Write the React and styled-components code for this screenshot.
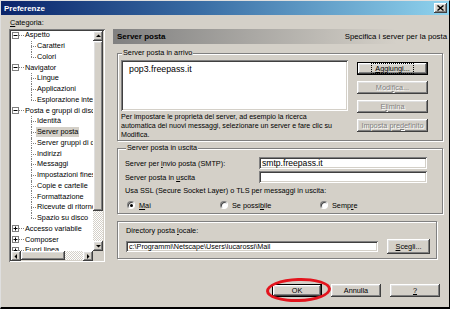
import React from "react";
import styled, { createGlobalStyle, css } from "styled-components";

const GlobalStyle = createGlobalStyle`
  html, body {
    margin: 0;
    padding: 0;
    background: #d4d0c8;
  }
  body {
    font-family: "Liberation Sans", Arial, sans-serif;
  }
`;

const raised = css`
  box-shadow: inset -1px -1px 0 #404040, inset 1px 1px 0 #ffffff,
    inset -2px -2px 0 #808080, inset 2px 2px 0 #dfdfdf;
`;

const sunken = css`
  box-shadow: inset 1px 1px 0 #808080, inset -1px -1px 0 #ffffff,
    inset 2px 2px 0 #404040, inset -2px -2px 0 #d4d0c8;
`;

const dither = css`
  background: repeating-conic-gradient(#ffffff 0 25%, #d4d0c8 0 50%) 0 0 / 2px
    2px;
`;

const tree = [
  { label: "Aspetto", open: true, children: ["Caratteri", "Colori"] },
  {
    label: "Navigator",
    open: true,
    children: ["Lingue", "Applicazioni", "Esplorazione intelligente"],
  },
  {
    label: "Posta e gruppi di discussione",
    open: true,
    children: [
      "Identità",
      "Server posta",
      "Server gruppi di discussione",
      "Indirizzi",
      "Messaggi",
      "Impostazioni finestra",
      "Copie e cartelle",
      "Formattazione",
      "Ricevute di ritorno",
      "Spazio su disco",
    ],
  },
  { label: "Accesso variabile", open: false },
  { label: "Composer", open: false },
  { label: "Fuori linea", open: false },
];

const Expander = ({ open }) => (
  <ExpanderIcon width="7" height="7" viewBox="0 0 7 7">
    <rect x="0.5" y="0.5" width="6" height="6" fill="#fff" stroke="#808080" />
    <path d="M1.5 3.5h4" stroke="#000" />
    {!open && <path d="M3.5 1.5v4" stroke="#000" />}
  </ExpanderIcon>
);

const Arrow = ({ dir }) => {
  const paths = {
    up: "M1 4h5L3.5 1.5z",
    down: "M1 2h5L3.5 4.5z",
    left: "M4 1v5L1.5 3.5z",
    right: "M2 1v5l2.5-2.5z",
  };
  return (
    <svg width="7" height="7" viewBox="0 0 7 7">
      <path d={paths[dir]} fill="#000" />
    </svg>
  );
};

const u = (s) => <U>{s}</U>;

const Preferences = () => {
  return (
    <Window>
      <TitleBar>
        <span>Preferenze</span>
        <CloseButton>
          <svg width="7" height="6" viewBox="0 0 7 6">
            <path d="M0.5 0.5l6 5M6.5 0.5l-6 5" stroke="#000" strokeWidth="1.4" />
          </svg>
        </CloseButton>
      </TitleBar>

      <Body>
        <CategoryLabel>{u("C")}ategoria:</CategoryLabel>

        <TreeBox>
          <TreeList>
            {tree.map((node) => (
              <div key={node.label}>
                <RootRow>
                  <Expander open={node.open} />
                  <Connector />
                  <NodeLabel>{node.label}</NodeLabel>
                </RootRow>
                {node.open && (
                  <ChildList>
                    {node.children.map((c) => (
                      <ChildRow key={c}>
                        <NodeLabel $selected={c === "Server posta"}>{c}</NodeLabel>
                      </ChildRow>
                    ))}
                  </ChildList>
                )}
              </div>
            ))}
          </TreeList>
          <VScroll>
            <ScrollButton>
              <Arrow dir="up" />
            </ScrollButton>
            <VThumb />
            <Track />
            <ScrollButton>
              <Arrow dir="down" />
            </ScrollButton>
          </VScroll>
          <HScroll>
            <ScrollButton>
              <Arrow dir="left" />
            </ScrollButton>
            <HThumb />
            <Track />
            <ScrollButton>
              <Arrow dir="right" />
            </ScrollButton>
          </HScroll>
          <Corner />
        </TreeBox>

        <Panel>
          <HeaderBar>
            <HeaderTitle>Server posta</HeaderTitle>
            <HeaderHint>Specifica i server per la posta</HeaderHint>
          </HeaderBar>

          <Group $mt={4} $pad="2px 14px 0 3px">
            <Legend>Server posta in arrivo</Legend>
            <IncomingRow>
              <div>
                <ServerList>pop3.freepass.it</ServerList>
                <Description>
                  Per impostare le proprietà del server, ad esempio la ricerca
                  <br />
                  automatica dei nuovi messaggi, selezionare un server e fare clic su
                  <br />
                  Modifica.
                </Description>
              </div>
              <ButtonColumn>
                <Button $default>
                  <Focus>{u("A")}ggiungi...</Focus>
                </Button>
                <Button disabled>Modi{u("f")}ica...</Button>
                <Button disabled>E{u("l")}imina</Button>
                <Button disabled>Imposta pre{u("d")}efinito</Button>
              </ButtonColumn>
            </IncomingRow>
          </Group>

          <Group $mt={2} $pad="2px 15px 3px 7px">
            <Legend>Server posta in uscita</Legend>
            <FieldRow>
              <span>Server per {u("i")}nvio posta (SMTP):</span>
              <TextInput $w={168}>smtp.freepass.it</TextInput>
            </FieldRow>
            <FieldRow $mt={2}>
              <span>Server posta in {u("u")}scita</span>
              <TextInput $w={168} />
            </FieldRow>
            <TextLine $mt={3}>
              Usa SSL (Secure Socket Layer) o TLS per messaggi in uscita:
            </TextLine>
            <RadioRow>
              <RadioOption>
                <Radio $checked />
                <span>{u("M")}ai</span>
              </RadioOption>
              <RadioOption>
                <Radio />
                <span>Se possi{u("b")}ile</span>
              </RadioOption>
              <RadioOption>
                <Radio />
                <span>Semp{u("r")}e</span>
              </RadioOption>
            </RadioRow>
          </Group>

          <Group $mt={7} $mr={10} $pad="4px 6px 4px 8px">
            <TextLine>Directory posta {u("l")}ocale:</TextLine>
            <DirectoryRow>
              <TextInput $w={252} $small>
                c:\Programmi\Netscape\Users\lucarossi\Mail
              </TextInput>
              <Button $w={43} $h={15}>
                {u("S")}cegli...
              </Button>
            </DirectoryRow>
          </Group>
        </Panel>
      </Body>

      <Footer>
        <OkWrap>
          <Button $w={50} $default>
            OK
          </Button>
          <RedCircle />
        </OkWrap>
        <Button $w={50}>Annulla</Button>
        <Button $w={50}>{u("?")}</Button>
      </Footer>
    </Window>
  );
};

const Window = styled.div`
  width: 450px;
  height: 309px;
  box-sizing: border-box;
  display: flex;
  flex-direction: column;
  background: #d4d0c8;
  border-top: 1px solid #dfdfdf;
  border-left: 1px solid #dfdfdf;
  border-right: 1px solid #000;
  border-bottom: 2px solid #000;
  color: #000;
  font-size: 7.3px;
  overflow: hidden;
`;

const TitleBar = styled.div`
  height: 14px;
  flex: none;
  display: flex;
  align-items: center;
  justify-content: space-between;
  padding: 0 2px 0 3px;
  background: linear-gradient(90deg, #0a246a 0%, #3a6ea5 45%, #8fd3ee 100%);
  color: #fff;
  font-weight: bold;
  font-size: 8px;
`;

const CloseButton = styled.div`
  width: 13px;
  height: 10px;
  display: flex;
  align-items: center;
  justify-content: center;
  background: #d4d0c8;
  ${raised};
`;

const Body = styled.div`
  display: grid;
  grid-template-columns: 96px 334px;
  grid-template-rows: 12px 233px;
  column-gap: 8px;
  padding: 2px 0 0 8px;
`;

const CategoryLabel = styled.div`
  grid-column: 1;
  grid-row: 1;
  line-height: 12px;
  padding-left: 1px;
`;

const U = styled.span`
  text-decoration: underline;
`;

const TreeBox = styled.div`
  grid-column: 1;
  grid-row: 2;
  box-sizing: border-box;
  padding: 2px;
  background: #fff;
  display: grid;
  grid-template-columns: 82px 10px;
  grid-template-rows: 220px 9px;
  ${sunken};
`;

const TreeList = styled.div`
  overflow: hidden;
  white-space: nowrap;
  margin-top: -1px;
`;

const RootRow = styled.div`
  height: 10.75px;
  display: flex;
  align-items: center;
`;

const ExpanderIcon = styled.svg`
  flex: none;
  margin-left: 1px;
  display: block;
`;

const Connector = styled.span`
  width: 5px;
  flex: none;
  border-top: 1px dotted #808080;
`;

const NodeLabel = styled.span`
  padding: 0 1px;
  line-height: 10px;
  background: ${(p) => (p.$selected ? "#d4d0c8" : "transparent")};
`;

const ChildList = styled.div`
  margin-left: 20px;
`;

const ChildRow = styled.div`
  position: relative;
  height: 10.75px;
  display: flex;
  align-items: center;
  padding-left: 5px;

  &::before {
    content: "";
    position: absolute;
    left: 0;
    top: 0;
    bottom: 0;
    border-left: 1px dotted #808080;
  }
  &:last-child::before {
    bottom: 50%;
  }
  &::after {
    content: "";
    position: absolute;
    left: 0;
    top: 50%;
    width: 5px;
    border-top: 1px dotted #808080;
  }
`;

const VScroll = styled.div`
  grid-column: 2;
  grid-row: 1;
  display: flex;
  flex-direction: column;
`;

const HScroll = styled.div`
  grid-column: 1;
  grid-row: 2;
  display: flex;
`;

const Corner = styled.div`
  grid-column: 2;
  grid-row: 2;
  background: #d4d0c8;
`;

const ScrollButton = styled.div`
  width: 10px;
  height: 10px;
  flex: none;
  display: flex;
  align-items: center;
  justify-content: center;
  background: #d4d0c8;
  ${raised};
`;

const VThumb = styled.div`
  height: 170px;
  flex: none;
  background: #d4d0c8;
  ${raised};
`;

const HThumb = styled.div`
  width: 44px;
  flex: none;
  background: #d4d0c8;
  ${raised};
`;

const Track = styled.div`
  flex: 1;
  ${dither};
`;

const Panel = styled.div`
  grid-column: 2;
  grid-row: 2;
  display: flex;
  flex-direction: column;
`;

const HeaderBar = styled.div`
  height: 15px;
  flex: none;
  display: flex;
  align-items: center;
  justify-content: space-between;
  padding: 0 0 0 4px;
  background: linear-gradient(90deg, #808080 0%, #a8a6a2 40%, #d4d0c8 85%);
`;

const HeaderTitle = styled.span`
  font-weight: bold;
  font-size: 8px;
`;

const HeaderHint = styled.span`
  font-size: 7.8px;
`;

const Group = styled.fieldset`
  margin: ${(p) => p.$mt || 0}px ${(p) => p.$mr || 4}px 0 4px;
  padding: ${(p) => p.$pad};
  min-width: 0;
  border: 1px solid #808080;
  box-shadow: inset 1px 1px 0 #fff, 1px 1px 0 #fff;
`;

const Legend = styled.legend`
  padding: 0 1px;
  margin-left: 1px;
  line-height: 10px;
  background: #d4d0c8;
`;

const IncomingRow = styled.div`
  display: grid;
  grid-template-columns: 227px 71px;
  column-gap: 9px;
`;

const ServerList = styled.div`
  height: 51px;
  box-sizing: border-box;
  padding: 4px 8px;
  background: #fff;
  font-size: 8.8px;
  ${sunken};
`;

const Description = styled.div`
  margin-top: 2px;
  line-height: 9px;
  white-space: nowrap;
  font-size: 7.1px;
`;

const ButtonColumn = styled.div`
  display: flex;
  flex-direction: column;
  gap: 6px;
  padding-top: 2px;
`;

const Button = styled.button`
  display: block;
  width: ${(p) => (p.$w ? `${p.$w}px` : "100%")};
  height: ${(p) => p.$h || 13}px;
  flex: none;
  box-sizing: border-box;
  margin: 0;
  padding: 0;
  border: ${(p) => (p.$default ? "1px solid #000" : "none")};
  background: #d4d0c8;
  font-family: inherit;
  font-size: 7.3px;
  line-height: 1;
  text-align: center;
  white-space: nowrap;
  color: #000;
  ${raised};

  &:disabled {
    color: #808080;
    text-shadow: 1px 1px 0 #fff;
  }
`;

const Focus = styled.span`
  display: inline-block;
  padding: 1px 3px;
  outline: 1px dotted #000;
`;

const FieldRow = styled.div`
  height: 12px;
  margin-top: ${(p) => p.$mt || 2}px;
  display: flex;
  align-items: center;
  justify-content: space-between;
`;

const TextInput = styled.div`
  width: ${(p) => p.$w}px;
  height: ${(p) => (p.$small ? 11 : 12)}px;
  flex: none;
  box-sizing: border-box;
  padding: 0 3px;
  display: flex;
  align-items: center;
  background: #fff;
  white-space: nowrap;
  overflow: hidden;
  font-size: ${(p) => (p.$small ? 7.2 : 8.6)}px;
  ${sunken};
`;

const TextLine = styled.div`
  height: 10px;
  line-height: 10px;
  margin-top: ${(p) => p.$mt || 0}px;
  white-space: nowrap;
`;

const RadioRow = styled.div`
  display: grid;
  grid-template-columns: 93px 100px auto;
  height: 10px;
  margin-top: 4px;
  padding-left: 2px;
`;

const RadioOption = styled.label`
  display: flex;
  align-items: center;
  gap: 4px;
`;

const Radio = styled.span`
  width: 8px;
  height: 8px;
  box-sizing: border-box;
  border-radius: 50%;
  border: 1px solid;
  border-color: #808080 #fff #fff #808080;
  background: #fff;
  box-shadow: inset 1px 1px 0 #404040;
  display: flex;
  align-items: center;
  justify-content: center;

  &::after {
    content: "";
    width: 3px;
    height: 3px;
    border-radius: 50%;
    background: ${(p) => (p.$checked ? "#000" : "transparent")};
  }
`;

const DirectoryRow = styled.div`
  margin-top: 3px;
  display: flex;
  align-items: center;
  gap: 9px;
`;

const Footer = styled.div`
  display: flex;
  justify-content: flex-end;
  gap: 9px;
  padding: 22px 9px 0 0;
`;

const OkWrap = styled.div`
  position: relative;
`;

const RedCircle = styled.span`
  position: absolute;
  top: -6px;
  left: -6px;
  right: -9px;
  bottom: -5px;
  border: 3px solid #e3141d;
  border-radius: 50%;
  transform: rotate(-2deg);
  pointer-events: none;
`;

export default function App() {
  return (
    <>
      <GlobalStyle />
      <Preferences />
    </>
  );
}
